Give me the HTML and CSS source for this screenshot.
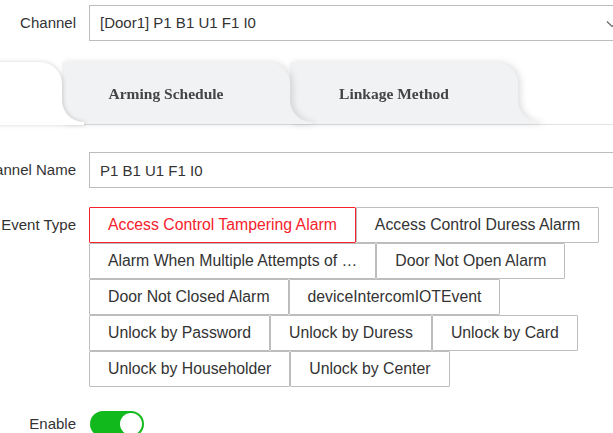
FILE: index.html
```html
<!DOCTYPE html>
<html lang="en">
<head>
    <meta charset="UTF-8">
    <meta name="viewport" content="width=device-width, initial-scale=1.0">
    <title>Event Settings</title>
    <link rel="stylesheet" href="styles.css">
</head>
<body>
    <div class="page">
        <div class="row">
            <label class="row-label">Channel</label>
            <div class="select">
                <span>[Door1] P1 B1 U1 F1 I0</span>
                <svg class="chevron" width="12" height="8" viewBox="0 0 12 8">
                    <path d="M1 1.5 L6 6.5 L11 1.5" fill="none" stroke="#666" stroke-width="1.2"/>
                </svg>
            </div>
        </div>

        <div class="tabs">
            <div class="tab active"></div>
            <div class="tab tab-2">Arming Schedule</div>
            <div class="tab tab-3">Linkage Method</div>
        </div>

        <div class="row row-name">
            <label class="row-label">Channel Name</label>
            <input class="text-input" type="text" value="P1 B1 U1 F1 I0">
        </div>

        <div class="row row-events">
            <label class="row-label">Event Type</label>
            <div class="event-list">
                <button class="event selected">Access Control Tampering Alarm</button>
                <button class="event">Access Control Duress Alarm</button>
                <button class="event">Alarm When Multiple Attempts of …</button>
                <button class="event">Door Not Open Alarm</button>
                <button class="event">Door Not Closed Alarm</button>
                <button class="event">deviceIntercomIOTEvent</button>
                <button class="event">Unlock by Password</button>
                <button class="event">Unlock by Duress</button>
                <button class="event">Unlock by Card</button>
                <button class="event">Unlock by Householder</button>
                <button class="event">Unlock by Center</button>
            </div>
        </div>

        <div class="row row-enable">
            <label class="row-label">Enable</label>
            <span class="switch on"><span class="knob"></span></span>
        </div>
    </div>
</body>
</html>
```

FILE: styles.css
```css
body {
    margin: 0;
    background: #ffffff;
    color: #333333;
    font-family: "Liberation Sans", Arial, sans-serif;
    font-size: 15px;
    overflow: hidden;
}
.page {
    margin-left: -44px;
    padding-top: 5px;
}
.row {
    display: flex;
    align-items: flex-start;
}
.row-label {
    width: 120px;
    flex: none;
    margin-right: 13px;
    text-align: right;
    line-height: 36px;
    white-space: nowrap;
    color: #333;
}
.select,
.text-input {
    box-sizing: border-box;
    width: 540px;
    flex: none;
    height: 36px;
    border: 1px solid #bcbcbc;
    background: #fff;
    font-family: inherit;
    font-size: 15px;
    color: #333;
    padding: 0 10px;
}
.select {
    position: relative;
    line-height: 34px;
}
.chevron {
    position: absolute;
    right: 10px;
    top: 14px;
}
.text-input {
    outline: none;
}

/* tabs */
.tabs {
    display: flex;
    height: 62px;
    margin-top: 21px;
    border-bottom: 1px solid #e2e2e2;
}
.tab {
    position: relative;
    box-sizing: border-box;
    height: 62px;
    background: #f1f2f4;
    border-top-right-radius: 22px;
    font-family: "Liberation Serif", "Times New Roman", serif;
    font-weight: bold;
    font-size: 15.5px;
    color: #444;
    line-height: 64px;
    text-align: center;
    padding-right: 20px;
    filter: drop-shadow(3px 0 3px rgba(0, 0, 0, 0.12));
}
.tab::after {
    content: "";
    position: absolute;
    left: 100%;
    bottom: 0;
    width: 22px;
    height: 24px;
    background: radial-gradient(circle at 100% 0, transparent 21.5px, #f1f2f4 22.5px);
}
.tab.active {
    width: 106px;
    height: 63px;
    margin-bottom: -1px;
    background: #fff;
    z-index: 3;
    filter: drop-shadow(1px 0 2px rgba(0, 0, 0, 0.16));
}
.tab.active::after {
    height: 25px;
    background: radial-gradient(circle at 100% 0, transparent 21.5px, #fff 22.5px);
}
.tab-2 {
    width: 228px;
    z-index: 2;
}
.tab-3 {
    width: 228px;
    z-index: 1;
}

.row-name {
    margin-top: 27px;
}

/* event types */
.row-events {
    margin-top: 19px;
}
.event-list {
    display: flex;
    flex-wrap: wrap;
    width: 525px;
}
.event {
    box-sizing: border-box;
    height: 36px;
    margin: 0;
    padding: 0 18px;
    border: 1px solid #bdbdbd;
    border-radius: 1px;
    background: #fff;
    font-family: "Liberation Sans", Arial, sans-serif;
    font-size: 15.8px;
    color: #333;
    white-space: nowrap;
    cursor: pointer;
}
.event.selected {
    border-color: #f5222d;
    color: #f5222d;
}

/* enable switch */
.row-enable {
    margin-top: 24px;
}
.row-enable .row-label {
    line-height: 26px;
}
.switch {
    position: relative;
    display: inline-block;
    width: 54px;
    height: 26px;
    border-radius: 13px;
    background: #12b91c;
    margin-left: 1px;
}
.knob {
    position: absolute;
    top: 2px;
    right: 2px;
    width: 22px;
    height: 22px;
    border-radius: 50%;
    background: #fff;
}
```
